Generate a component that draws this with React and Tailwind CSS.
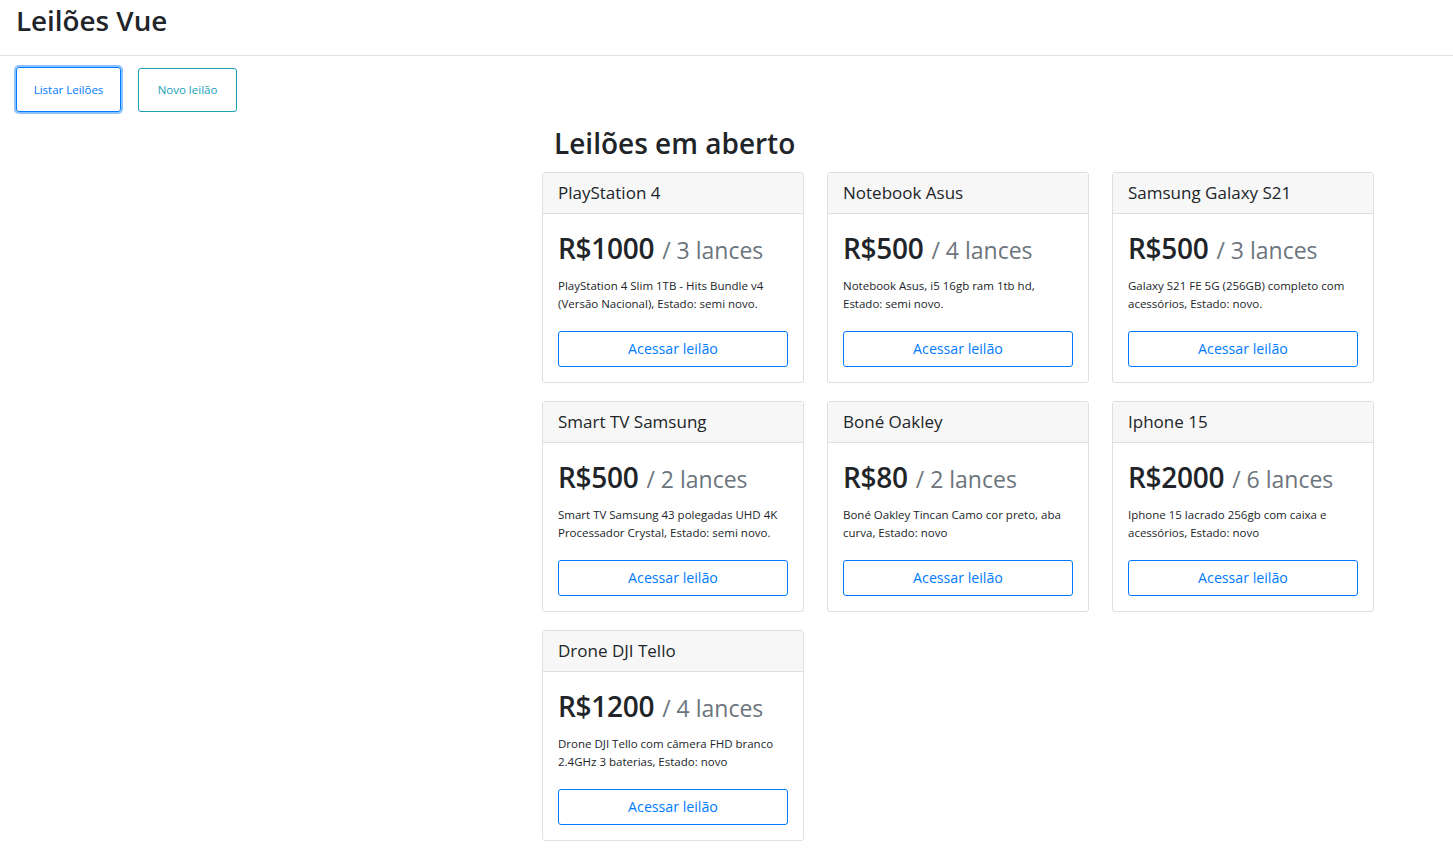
import React from 'react'

const leiloes = [
  { titulo: 'PlayStation 4', valor: 1000, lances: 3, descricao: 'PlayStation 4 Slim 1TB - Hits Bundle v4 (Versão Nacional), Estado: semi novo.' },
  { titulo: 'Notebook Asus', valor: 500, lances: 4, descricao: 'Notebook Asus, i5 16gb ram 1tb hd, Estado: semi novo.' },
  { titulo: 'Samsung Galaxy S21', valor: 500, lances: 3, descricao: 'Galaxy S21 FE 5G (256GB) completo com acessórios, Estado: novo.' },
  { titulo: 'Smart TV Samsung', valor: 500, lances: 2, descricao: 'Smart TV Samsung 43 polegadas UHD 4K Processador Crystal, Estado: semi novo.' },
  { titulo: 'Boné Oakley', valor: 80, lances: 2, descricao: 'Boné Oakley Tincan Camo cor preto, aba curva, Estado: novo' },
  { titulo: 'Iphone 15', valor: 2000, lances: 6, descricao: 'Iphone 15 lacrado 256gb com caixa e acessórios, Estado: novo' },
  { titulo: 'Drone DJI Tello', valor: 1200, lances: 4, descricao: 'Drone DJI Tello com câmera FHD branco 2.4GHz 3 baterias, Estado: novo' },
]

const CardLeilao = ({ leilao }) => (
  <div className="w-[262px] h-[211px] border border-[#dfdfdf] rounded-[3px] bg-white flex flex-col">
    <div className="h-[41px] bg-[#f7f7f7] border-b border-[#dfdfdf] px-[15px] flex items-center text-[17px] text-[#212529]">
      {leilao.titulo}
    </div>
    <div className="px-[15px] pt-[16px] pb-[15px] flex flex-col">
      <div className="h-[36px] leading-[36px] whitespace-nowrap">
        <span className="text-[28px] font-semibold text-[#212529] tracking-[-0.3px]">R${leilao.valor}</span>
        <span className="text-[23px] text-[#6c757d] ml-[8px]">/ {leilao.lances} lances</span>
      </div>
      <p className="mt-[11px] h-[36px] text-[11.5px] leading-[18px] text-[#212529]">{leilao.descricao}</p>
      <button className="mt-[18px] h-[36px] w-[230px] border border-[#007bff] rounded-[3px] text-[14.2px] text-[#007bff] bg-white">
        Acessar leilão
      </button>
    </div>
  </div>
)

export default function App() {
  return (
    <div className="min-h-screen bg-white text-[#212529]" style={{ fontFamily: '"Segoe UI", "Open Sans", "Noto Sans", sans-serif' }}>
      <header className="h-[56px] border-b border-[#dfdfdf] px-[16px] pt-[3px]">
        <h3 className="text-[27.8px] font-semibold leading-[34px]">Leilões Vue</h3>
      </header>
      <nav className="flex items-start gap-[17px] pl-[16px] pt-[11px]">
        <button className="w-[105px] h-[45px] border border-[#007bff] rounded-[3px] text-[11.5px] text-[#007bff] shadow-[0_0_0_2px_rgba(0,123,255,0.45)]">
          Listar Leilões
        </button>
        <button className="mt-[1px] w-[99px] h-[44px] border border-[#17a2b8] rounded-[3px] text-[11.5px] text-[#17a2b8]">
          Novo leilão
        </button>
      </nav>
      <main className="ml-[542px] w-[832px] pt-[14px] pb-[12px]">
        <h2 className="ml-[12px] text-[28px] font-semibold leading-[34px] mb-[12px]">Leilões em aberto</h2>
        <div className="grid grid-cols-[262px_262px_262px] gap-x-[23px] gap-y-[18px]">
          {leiloes.map((l) => (
            <CardLeilao key={l.titulo} leilao={l} />
          ))}
        </div>
      </main>
    </div>
  )
}
